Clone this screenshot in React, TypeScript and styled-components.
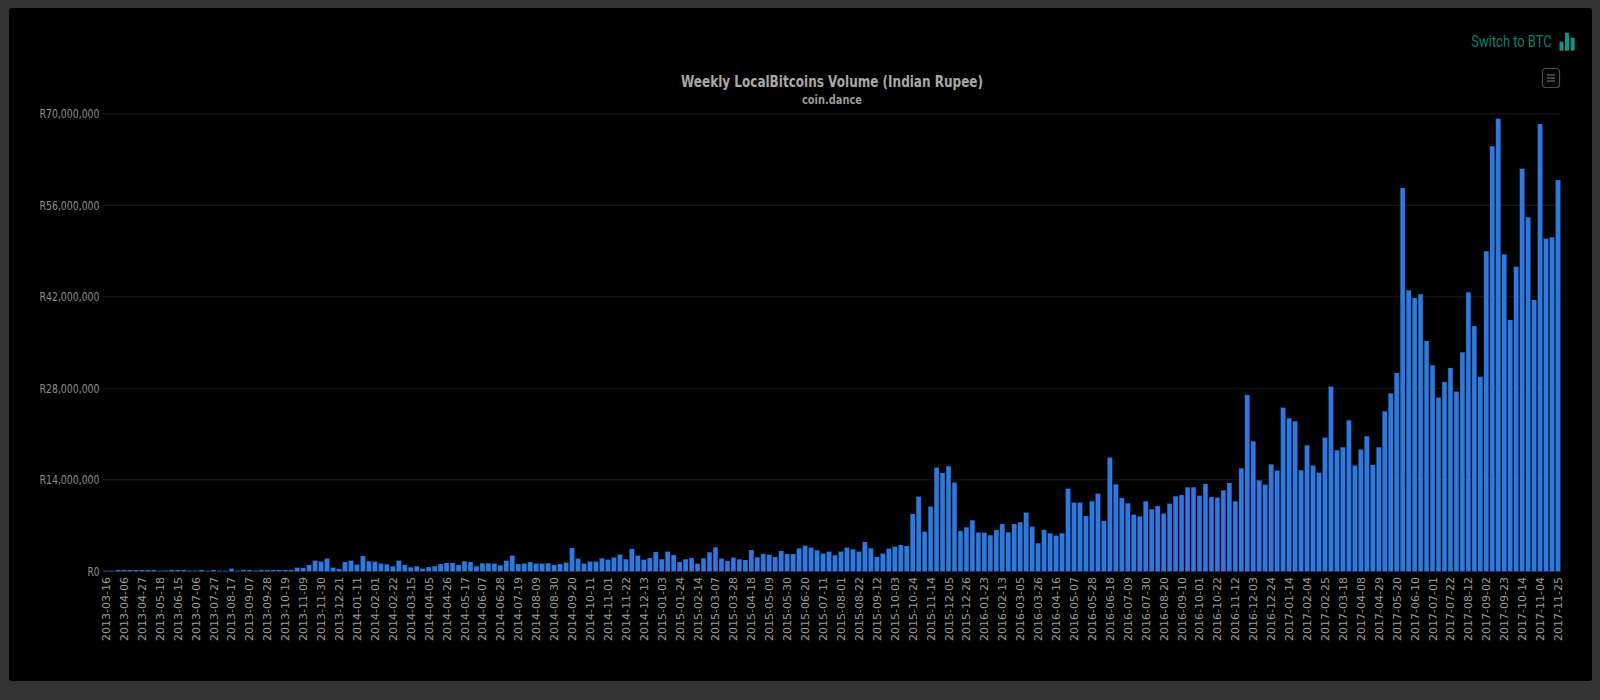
import React from 'react'
import styled, { createGlobalStyle } from 'styled-components'

const BAR_TOPS = [
  570.8, 570.8, 570, 570, 570, 570, 570, 570, 570, 570.8, 570.6, 570, 570, 570, 570.8, 570.8, 570, 570.8, 570, 570.8,
  570.8, 568.7, 570.8, 570, 570, 570.6, 570, 570, 570, 570, 570, 570, 567.7, 568, 565, 560.7, 561.7, 558.7, 567.7, 569,
  562, 560.7, 564.7, 556, 561.3, 561.7, 563.7, 564.3, 566.3, 560.7, 565, 567.3, 566.3, 568.7, 567, 566.3, 564, 563, 563, 565,
  561.3, 562, 566.3, 563.3, 563.3, 563.7, 565.3, 560.7, 555.7, 564, 563.7, 562, 563.7, 563.7, 563.3, 565, 564, 562.7, 548, 558.7,
  563.7, 561.7, 561.7, 558.3, 559.7, 557.7, 554.7, 559.3, 549, 555.7, 559.7, 558, 552, 559.3, 551.7, 555, 562, 559.3, 558, 563.7,
  558.3, 552.3, 547.3, 558.7, 561, 557.7, 559.3, 560, 550, 557.3, 554, 554.7, 557, 551, 554, 554, 548.3, 545.7, 547.7, 550.3,
  553.7, 551.7, 555.3, 551.7, 547.7, 549.3, 551.7, 542, 548.3, 557, 553.7, 548.7, 546.7, 545, 546, 514, 496.7, 531.7, 506.7, 467.7,
  473, 466.3, 482.7, 531, 527.3, 520.3, 532.7, 532.7, 535.3, 530, 524, 532.3, 524, 522.3, 512.7, 526.7, 543.3, 530, 533.3, 535.7,
  533.3, 488.7, 502.7, 502.7, 516, 501.3, 493.7, 521, 457.7, 484.3, 498, 503.3, 514.7, 516.3, 501.3, 509.3, 506, 513.7, 503.7, 496.3,
  495, 487.3, 487.3, 495.7, 484, 497, 497.7, 490.3, 483, 501.3, 468.3, 395, 441.3, 480.3, 484.7, 464.3, 470.7, 407.7, 418.3, 421.3,
  470.3, 445.3, 465.7, 472.7, 437.7, 386.7, 450.3, 447.3, 420.3, 465.7, 449.7, 436.3, 465, 447.3, 411.3, 393.3, 373, 188, 290.3, 298,
  294.3, 341, 365.3, 397.7, 382, 368, 391.7, 352.3, 292.3, 326, 376.7, 251.3, 146.3, 118.7, 254.3, 320, 266.7, 168.7, 217.3, 300,
  124, 238.7, 237.3, 180,
]

const DATE_LABELS = [
  '2013-03-16', '2013-04-06', '2013-04-27', '2013-05-18', '2013-06-15', '2013-07-06', '2013-07-27', '2013-08-17', '2013-09-07',
  '2013-09-28', '2013-10-19', '2013-11-09', '2013-11-30', '2013-12-21', '2014-01-11', '2014-02-01', '2014-02-22', '2014-03-15',
  '2014-04-05', '2014-04-26', '2014-05-17', '2014-06-07', '2014-06-28', '2014-07-19', '2014-08-09', '2014-08-30', '2014-09-20',
  '2014-10-11', '2014-11-01', '2014-11-22', '2014-12-13', '2015-01-03', '2015-01-24', '2015-02-14', '2015-03-07', '2015-03-28',
  '2015-04-18', '2015-05-09', '2015-05-30', '2015-06-20', '2015-07-11', '2015-08-01', '2015-08-22', '2015-09-12', '2015-10-03',
  '2015-10-24', '2015-11-14', '2015-12-05', '2015-12-26', '2016-01-23', '2016-02-13', '2016-03-05', '2016-03-26', '2016-04-16',
  '2016-05-07', '2016-05-28', '2016-06-18', '2016-07-09', '2016-07-30', '2016-08-20', '2016-09-10', '2016-10-01', '2016-10-22',
  '2016-11-12', '2016-12-03', '2016-12-24', '2017-01-14', '2017-02-04', '2017-02-25', '2017-03-18', '2017-04-08', '2017-04-29',
  '2017-05-20', '2017-06-10', '2017-07-01', '2017-07-22', '2017-08-12', '2017-09-02', '2017-09-23', '2017-10-14', '2017-11-04',
  '2017-11-25',
]

const Y_TICKS = ['R70,000,000', 'R56,000,000', 'R42,000,000', 'R28,000,000', 'R14,000,000', 'R0']

// chart svg starts this far from the page origin
const ORIGIN_X = 9
const ORIGIN_Y = 58
const PLOT_LEFT = 103 - ORIGIN_X
const PLOT_RIGHT = 1561 - ORIGIN_X
const BASELINE = 571.3 - ORIGIN_Y
const PITCH = (PLOT_RIGHT - PLOT_LEFT) / BAR_TOPS.length
const BAR_WIDTH = 4.7
const GRID_STEP = 91.5

const GlobalStyle = createGlobalStyle`
  html, body {
    margin: 0;
    background: #333;
  }
`

const Page = styled.div`
  height: 700px;
  overflow: hidden;
  padding: 8px 8px 19px 9px;
  box-sizing: border-box;
`

const Panel = styled.main`
  height: 673px;
  display: flex;
  flex-direction: column;
  background: #000;
  border-radius: 3px;
`

const Toolbar = styled.div`
  height: 50px;
  flex: none;
  display: flex;
  justify-content: flex-end;
  align-items: flex-start;
  gap: 7px;
  padding: 24px 17px 0 0;
  box-sizing: border-box;
`

const SwitchLink = styled.a`
  display: block;
  font-family: Roboto, 'Liberation Sans', sans-serif;
  font-weight: 400;
  font-size: 17px;
  line-height: 19px;
  color: #0c7f6e;
  white-space: nowrap;
  transform: scaleX(0.76);
  transform-origin: right center;
`

const SwitchIcon = styled.svg`
  display: block;
  width: 16px;
  height: 19px;
  fill: #0e9482;
`

const Chart = styled.svg`
  display: block;
  flex: 1;
  width: 100%;
`

const GridLine = styled.line`
  stroke: #1b1b1b;
  stroke-width: 1;
`

const Bar = styled.rect`
  fill: #2f78e0;
  stroke: #1d4a8c;
  stroke-width: 0.25;
`

const Title = styled.text`
  font-family: 'DejaVu Sans', sans-serif;
  font-weight: 700;
  font-size: 15px;
  fill: #a8a8a8;
  text-anchor: middle;
`

const Subtitle = styled(Title)`
  font-size: 12px;
  fill: #999;
`

const YLabel = styled.text`
  font-family: 'DejaVu Sans', sans-serif;
  font-size: 12px;
  fill: #8c8c8c;
`

const XLabel = styled.text`
  font-family: 'DejaVu Sans', sans-serif;
  font-size: 11px;
  fill: #9c9c9c;
  text-anchor: end;
`

const MenuFrame = styled.rect`
  fill: #050505;
  stroke: #4a4a4a;
  stroke-width: 1.2;
`

const MenuLine = styled.line`
  stroke: #505050;
  stroke-width: 1.6;
`

const ContextButton = () => (
  <g transform={`translate(${1542 - ORIGIN_X} ${68 - ORIGIN_Y})`}>
    <MenuFrame x={0.5} y={0.5} width={17} height={19} rx={3} />
    <MenuLine x1={5} x2={13} y1={7} y2={7} />
    <MenuLine x1={5} x2={13} y1={10} y2={10} />
    <MenuLine x1={5} x2={13} y1={13} y2={13} />
  </g>
)

const App = () => {
  return (
    <Page>
      <GlobalStyle />
      <Panel>
        <Toolbar>
          <SwitchLink>Switch to BTC</SwitchLink>
          <SwitchIcon viewBox="0 0 16 19">
            <rect x="0.5" y="9.7" width="4" height="9" />
            <rect x="6" y="0.7" width="4" height="18" />
            <rect x="11.7" y="5.7" width="4" height="13" />
          </SwitchIcon>
        </Toolbar>
        <Chart viewBox="0 0 1583 623">
          {Y_TICKS.map((tick, i) => {
            const y = BASELINE - GRID_STEP * (Y_TICKS.length - 1 - i)
            return (
              <g key={tick}>
                <GridLine x1={PLOT_LEFT} x2={PLOT_RIGHT} y1={y} y2={y} />
                <YLabel
                  x={90.5}
                  y={y + 4.5}
                  textAnchor="end"
                  textLength={tick === 'R0' ? 12 : 60}
                  lengthAdjust="spacingAndGlyphs"
                >
                  {tick}
                </YLabel>
              </g>
            )
          })}
          {BAR_TOPS.map((top, i) => (
            <Bar
              key={i}
              x={PLOT_LEFT + PITCH * (i + 0.5) - BAR_WIDTH / 2}
              y={top - ORIGIN_Y}
              width={BAR_WIDTH}
              height={BASELINE - (top - ORIGIN_Y)}
            />
          ))}
          {DATE_LABELS.map((label, i) => {
            const x = PLOT_LEFT + PITCH * (i * 3 + 0.5) + 4
            const y = 577 - ORIGIN_Y
            return (
              <XLabel key={label} x={x} y={y} transform={`rotate(-90 ${x} ${y})`}>
                {label}
              </XLabel>
            )
          })}
          <Title x={832 - ORIGIN_X} y={86.5 - ORIGIN_Y} textLength={302} lengthAdjust="spacingAndGlyphs">
            Weekly LocalBitcoins Volume (Indian Rupee)
          </Title>
          <Subtitle x={832 - ORIGIN_X} y={103.5 - ORIGIN_Y} textLength={60} lengthAdjust="spacingAndGlyphs">
            coin.dance
          </Subtitle>
          <ContextButton />
        </Chart>
      </Panel>
    </Page>
  )
}

export default App
